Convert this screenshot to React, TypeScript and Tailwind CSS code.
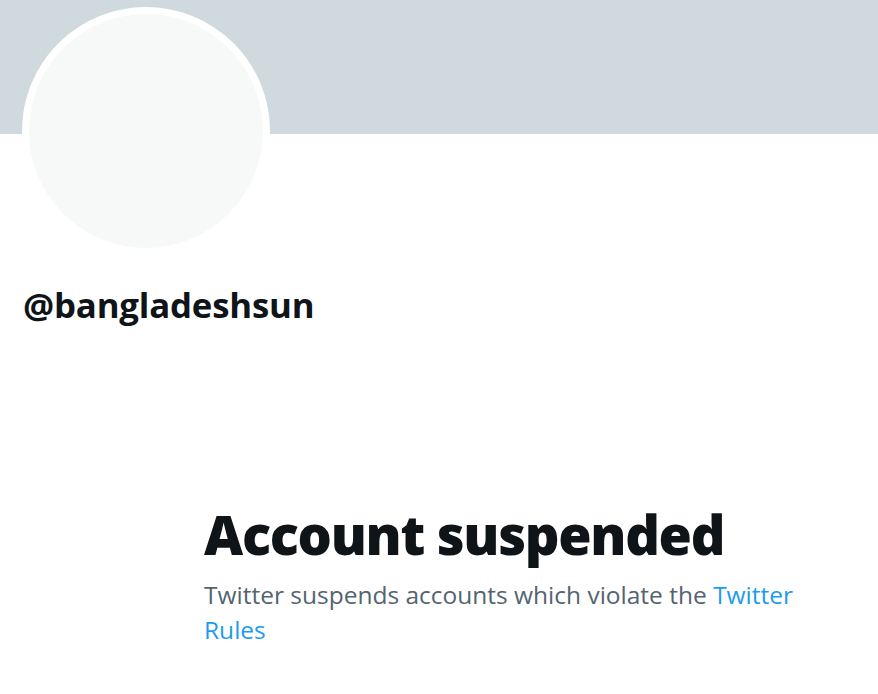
export default function App() {
  return (
    <div className="min-h-[694px] w-full bg-white font-['Open_Sans',sans-serif] text-[#0f1419]">
      <div className="h-[134px] w-full bg-[#cfd9de]" />
      <div className="ml-[22px] mt-[-127px] h-[248px] w-[248px] rounded-full border-[7px] border-white bg-[#f7f9f9]" />
      <div className="ml-[23px] mt-[30px] text-[34.8px] font-bold leading-[40px] tracking-[-0.2px]">@bangladeshsun</div>
      <div className="ml-[204px] mt-[179px] w-[600px]">
        <h1 className="text-[54px] font-extrabold leading-[60px] tracking-[-1.3px]">Account suspended</h1>
        <p className="mt-[13px] text-[24.5px] leading-[35px] text-[#536471]">
          Twitter suspends accounts which violate the{" "}
          <a className="text-[#1d9bf0]" href="#">
            Twitter
          </a>{" "}
          <a className="text-[#1d9bf0]" href="#">
            Rules
          </a>
        </p>
      </div>
    </div>
  );
}
